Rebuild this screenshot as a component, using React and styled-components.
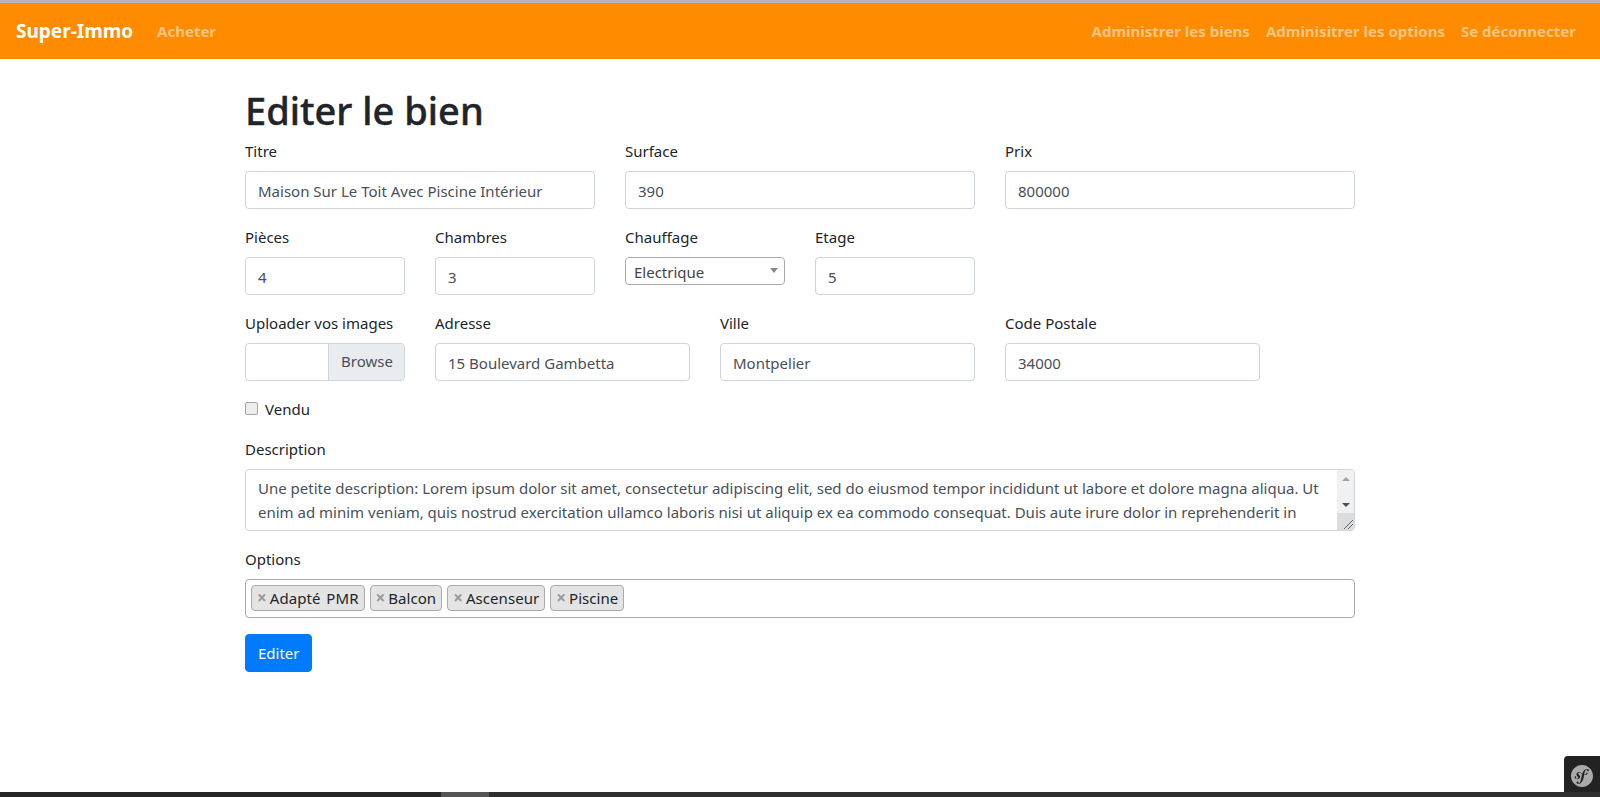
import React from "react";
import styled, { createGlobalStyle } from "styled-components";
import { SiSymfony } from "react-icons/si";

const GlobalStyle = createGlobalStyle`
  * {
    box-sizing: border-box;
  }
  html,
  body {
    margin: 0;
    padding: 0;
    background: #fff;
  }
  body {
    font-family: "Noto Sans", "Open Sans", sans-serif;
    font-size: 15px;
    line-height: 24px;
    color: #212529;
  }
`;

const Page = styled.div`
  min-height: 797px;
  display: flex;
  flex-direction: column;
  border-top: 3px solid #b4b4bc;
  position: relative;
`;

// navbar
const Navbar = styled.nav`
  height: 56px;
  padding: 8px 16px;
  display: flex;
  align-items: center;
  background-color: #ff8c00;
`;
const Brand = styled.a`
  font-size: 19px;
  line-height: 30px;
  font-weight: 700;
  color: #fff;
  margin-right: 16px;
`;
const NavGroup = styled.div`
  display: flex;
  margin-left: ${(props) => (props.right ? "auto" : "0")};
`;
const NavLink = styled.a`
  padding: 8px;
  font-weight: 700;
  font-size: 15px;
  color: rgba(255, 255, 255, 0.5);
`;

// form
const Main = styled.main`
  flex: 1;
  width: 1140px;
  margin: 24px auto 0;
  padding: 0 15px;
`;
const Title = styled.h1`
  margin: 0 0 5px;
  padding-top: 3px;
  font-size: 38px;
  line-height: 48px;
  font-weight: 500;
  -webkit-text-stroke: 0.4px #212529;
`;
const Row = styled.div`
  display: grid;
  grid-template-columns: repeat(12, 1fr);
  column-gap: 30px;
`;
const Field = styled.div`
  grid-column: span ${(props) => props.span || 12};
  margin-bottom: 16px;
`;
const Label = styled.label`
  display: block;
  margin-bottom: 8px;
`;
const Input = styled.input`
  display: block;
  width: 100%;
  height: 38px;
  padding: 7px 12px 5px;
  font: inherit;
  color: #495057;
  border: 1px solid #ced4da;
  border-radius: 4px;
  background: #fff;
`;
const SelectBox = styled.div`
  position: relative;
  height: 28px;
  padding-left: 8px;
  line-height: 28px;
  color: #444;
  border: 1px solid #aaa;
  border-radius: 4px;
`;
const SelectArrow = styled.span`
  position: absolute;
  top: 10px;
  right: 6px;
  border-style: solid;
  border-width: 5px 4px 0;
  border-color: #888 transparent transparent;
`;
const FileBox = styled.div`
  display: flex;
  height: 38px;
  border: 1px solid #ced4da;
  border-radius: 4px;
  overflow: hidden;
`;
const FileName = styled.div`
  flex: 1;
`;
const FileButton = styled.div`
  padding: 5px 12px 7px 12px;
  width: 76px;
  color: #495057;
  background: #e9ecef;
  border-left: 1px solid #ced4da;
`;
const CheckRow = styled.div`
  display: flex;
  align-items: center;
  gap: 7px;
  margin-bottom: 16px;
`;
const Checkbox = styled.input`
  appearance: none;
  width: 13px;
  height: 13px;
  margin: 0 0 1px;
  background: #ededed;
  border: 1px solid #a6a6a6;
  border-radius: 2px;
`;
const TextareaWrap = styled.div`
  position: relative;
`;
const Textarea = styled.textarea`
  display: block;
  width: 100%;
  height: 62px;
  padding: 6px 29px 6px 12px;
  font: inherit;
  color: #495057;
  border: 1px solid #ced4da;
  border-radius: 4px;
  overflow: hidden;
  resize: none;
`;
const Scrollbar = styled.div`
  position: absolute;
  top: 1px;
  right: 1px;
  bottom: 1px;
  width: 17px;
  display: flex;
  flex-direction: column;
  background: #f1f1f1;
  border-radius: 0 3px 3px 0;
  overflow: hidden;
`;
const ScrollArrow = styled.div`
  height: 17px;
  display: flex;
  align-items: center;
  justify-content: center;
  &::after {
    content: "";
    border-style: solid;
    border-width: ${(props) => (props.up ? "0 4px 4px" : "4px 4px 0")};
    border-color: ${(props) =>
      props.up
        ? "transparent transparent #a3a3a3"
        : "#505050 transparent transparent"};
  }
`;
const ScrollTrack = styled.div`
  flex: 1;
`;
const ResizeCorner = styled.div`
  height: 17px;
  display: flex;
  align-items: flex-end;
  justify-content: flex-end;
  background: #dcdcdc;
`;
const Tags = styled.div`
  min-height: 39px;
  padding: 0 5px 5px;
  display: flex;
  gap: 5px;
  border: 1px solid #aaa;
  border-radius: 4px;
`;
const Tag = styled.span`
  height: 26px;
  margin-top: 5px;
  padding: 0 5px;
  border: 1px solid #aaa;
  border-radius: 4px;
  background: #e4e4e4;
  line-height: 24px;
  word-spacing: 2px;
  letter-spacing: 0.05px;
`;
const TagRemove = styled.span`
  margin-right: 3px;
  font-size: 17px;
  color: #999;
  font-weight: 700;
`;
const Button = styled.button`
  height: 38px;
  padding: 6px 12px;
  width: 67px;
  font: inherit;
  color: #fff;
  background: #007bff;
  border: 1px solid #007bff;
  border-radius: 4px;
`;

// bottom of the window
const SfToolbar = styled.div`
  position: absolute;
  right: 0;
  bottom: 5px;
  width: 36px;
  height: 36px;
  padding-top: 4px;
  display: flex;
  align-items: center;
  justify-content: center;
  background: #222;
  border-top-left-radius: 4px;
  color: #aaa;
`;
const BottomBar = styled.div`
  height: 5px;
  display: flex;
  background: #2f2f2f;
`;
const BarPart = styled.div`
  width: ${(props) => props.w}px;
  flex: ${(props) => (props.w ? "none" : 1)};
  background: ${(props) => props.bg};
`;

const tags = ["Adapté PMR", "Balcon", "Ascenseur", "Piscine"];

const description =
  "Une petite description: Lorem ipsum dolor sit amet, consectetur adipiscing elit, sed do eiusmod tempor incididunt ut labore et dolore magna aliqua. Ut enim ad minim veniam, quis nostrud exercitation ullamco laboris nisi ut aliquip ex ea commodo consequat. Duis aute irure dolor in reprehenderit in voluptate velit esse cillum dolore eu fugiat nulla pariatur.";

const App = () => {
  return (
    <Page>
      <GlobalStyle />
      <Navbar>
        <Brand>Super-Immo</Brand>
        <NavGroup>
          <NavLink>Acheter</NavLink>
        </NavGroup>
        <NavGroup right>
          <NavLink>Administrer les biens</NavLink>
          <NavLink>Adminisitrer les options</NavLink>
          <NavLink>Se déconnecter</NavLink>
        </NavGroup>
      </Navbar>
      <Main>
        <Title>Editer le bien</Title>
        <Row>
          <Field span={4}>
            <Label>Titre</Label>
            <Input defaultValue="Maison Sur Le Toit Avec Piscine Intérieur" />
          </Field>
          <Field span={4}>
            <Label>Surface</Label>
            <Input defaultValue="390" />
          </Field>
          <Field span={4}>
            <Label>Prix</Label>
            <Input defaultValue="800000" />
          </Field>
        </Row>
        <Row>
          <Field span={2}>
            <Label>Pièces</Label>
            <Input defaultValue="4" />
          </Field>
          <Field span={2}>
            <Label>Chambres</Label>
            <Input defaultValue="3" />
          </Field>
          <Field span={2}>
            <Label>Chauffage</Label>
            <SelectBox>
              Electrique
              <SelectArrow />
            </SelectBox>
          </Field>
          <Field span={2}>
            <Label>Etage</Label>
            <Input defaultValue="5" />
          </Field>
        </Row>
        <Row>
          <Field span={2}>
            <Label>Uploader vos images</Label>
            <FileBox>
              <FileName />
              <FileButton>Browse</FileButton>
            </FileBox>
          </Field>
          <Field span={3}>
            <Label>Adresse</Label>
            <Input defaultValue="15 Boulevard Gambetta" />
          </Field>
          <Field span={3}>
            <Label>Ville</Label>
            <Input defaultValue="Montpelier" />
          </Field>
          <Field span={3}>
            <Label>Code Postale</Label>
            <Input defaultValue="34000" />
          </Field>
        </Row>
        <CheckRow>
          <Checkbox type="checkbox" />
          <span>Vendu</span>
        </CheckRow>
        <Field>
          <Label>Description</Label>
          <TextareaWrap>
            <Textarea defaultValue={description} />
            <Scrollbar>
              <ScrollArrow up />
              <ScrollTrack />
              <ScrollArrow />
              <ResizeCorner>
                <svg width="17" height="17" viewBox="0 0 17 17">
                  <path d="M7 16 L16 7 M11 16 L16 11" stroke="#666" strokeWidth="1" fill="none" />
                </svg>
              </ResizeCorner>
            </Scrollbar>
          </TextareaWrap>
        </Field>
        <Field>
          <Label>Options</Label>
          <Tags>
            {tags.map((tag) => (
              <Tag key={tag}>
                <TagRemove>×</TagRemove>
                {tag}
              </Tag>
            ))}
          </Tags>
        </Field>
        <Button>Editer</Button>
      </Main>
      <SfToolbar>
        <SiSymfony size={22} />
      </SfToolbar>
      <BottomBar>
        <BarPart w={441} bg="#262626" />
        <BarPart w={48} bg="#555" />
        <BarPart bg="#2f2f2f" />
      </BottomBar>
    </Page>
  );
};

export default App;
